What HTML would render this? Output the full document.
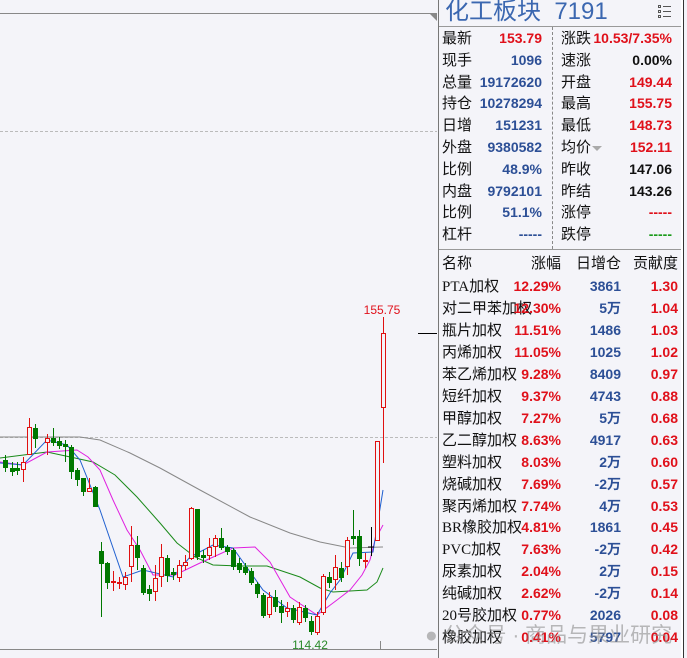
<!DOCTYPE html>
<html><head><meta charset="utf-8"><style>
body{margin:0;width:687px;height:658px;background:#f4f4f9;overflow:hidden;position:relative;font-family:"Liberation Sans","Noto Sans CJK SC",sans-serif}
.p{position:absolute;left:438px;top:0;width:242px;height:658px;border-left:1px solid #777;border-right:1px solid #999;background:#f4f4f9}
.r{position:absolute;font-size:14px;line-height:16px;white-space:nowrap}
.l{color:#111;font-size:15px;margin-top:1px}
.b{color:#2c4f96;font-weight:bold;text-align:right}
.rd{color:#e0101a;font-weight:bold;text-align:right}
.k{color:#111;font-weight:bold;text-align:right}
</style></head><body>
<svg width="438" height="658" style="position:absolute;left:0;top:0">
<line x1="0" y1="13.5" x2="437" y2="13.5" stroke="#888" stroke-width="1"/>
<polygon points="430,14 437,14 437,21" fill="#888"/>
<line x1="0" y1="131.5" x2="437" y2="131.5" stroke="#bbb" stroke-dasharray="3,2"/>
<line x1="0" y1="437.5" x2="437" y2="437.5" stroke="#bbb" stroke-dasharray="3,2"/>
<line x1="0" y1="649.5" x2="437" y2="649.5" stroke="#888"/>
<line x1="380.5" y1="641" x2="380.5" y2="650" stroke="#888"/>
<line x1="418" y1="333.5" x2="437" y2="333.5" stroke="#000"/>
<polyline fill="none" stroke="#888" stroke-width="1" points="0,437 80,437 100,440 130,453 160,468 200,490 250,517 290,533 320,542 350,548 383,547"/>
<polyline fill="none" stroke="#1a8a1a" stroke-width="1" points="0,458 47,452 75,458 93,462 115,475 137,497 160,523 177,543 195,557 213,565 240,566 267,566 300,577 320,588 333,592 367,590 377,582 383,568"/>
<polyline fill="none" stroke="#e020e0" stroke-width="1" points="0,462 23,465 47,452 77,450 88,457 100,470 113,500 127,530 140,550 153,575 175,575 200,563 233,548 255,547 270,562 290,597 317,615 337,600 350,590 362,575 370,560 375,540 383,525"/>
<polyline fill="none" stroke="#2060d0" stroke-width="1" points="0,463 23,465 47,440 67,445 80,460 100,510 123,577 143,570 173,577 190,557 213,545 233,548 263,590 287,608 317,615 330,593 340,580 353,553 373,552 383,490"/>
<g id="c"></g>
<text x="382" y="314" fill="#e0101a" font-size="12" text-anchor="middle" font-family="Liberation Sans">155.75</text>
<text x="310" y="649" fill="#2a8a2a" font-size="12" text-anchor="middle" font-family="Liberation Sans">114.42</text>
</svg>
<div class="p">
<div style="position:absolute;left:0;top:0;width:242px;height:26px;border-bottom:1px solid #999"></div>
<div class="r" style="left:6px;top:-1px;font-size:24px;line-height:26px;color:#3b67b0;letter-spacing:0px">化工板块&nbsp; 7191</div>
<div style="position:absolute;left:219px;top:5px;width:14px;height:12px">
<div style="position:absolute;left:0;top:0;width:3px;height:3px;border:1px solid #555;box-sizing:border-box"></div><div style="position:absolute;left:5px;top:1px;width:8px;height:1px;background:#555"></div>
<div style="position:absolute;left:0;top:5px;width:3px;height:3px;border:1px solid #555;box-sizing:border-box"></div><div style="position:absolute;left:5px;top:6px;width:8px;height:1px;background:#555"></div>
<div style="position:absolute;left:0;top:10px;width:3px;height:3px;border:1px solid #555;box-sizing:border-box"></div><div style="position:absolute;left:5px;top:11px;width:8px;height:1px;background:#555"></div>
</div>
<div style="position:absolute;left:113px;top:27px;height:222px;border-left:1px dashed #888"></div>
<div style="position:absolute;left:0;top:249px;width:242px;border-top:1px solid #999"></div>
<div id="t"></div>
<div style="position:absolute;left:26px;top:146px;width:0;height:0;border-left:5px solid transparent;border-right:5px solid transparent;border-top:5px solid #aaa;margin-left:127px"></div>
</div>
<div style="position:absolute;left:425px;top:619px;font-size:21px;color:rgba(140,140,140,0.6);white-space:nowrap;font-family:'Liberation Sans','Noto Sans CJK SC',sans-serif">●&nbsp;公众号 · 商品与果业研究</div>
<script>
var C=[[5,460,468,455,472,'g'],[12,468,472,462,476,'g'],[17,468,471,462,475,'g'],[23,462,470,457,482,'r'],[29,427,455,418,455,'r'],[35,428,439,424,448,'g'],[47,438,443,434,455,'r'],[53,438,443,428,446,'g'],[59,441,446,437,449,'g'],[65,444,447,440,462,'g'],[71,447,472,445,479,'g'],[77,470,480,468,486,'g'],[83,478,492,478,496,'g'],[89,488,492,478,492,'r'],[95,487,507,486,507,'g'],[101,551,564,542,617,'g'],[107,563,583,562,589,'g'],[113,581,583,571,591,'r'],[119,582,584,577,589,'r'],[125,577,585,572,590,'r'],[131,545,567,526,582,'r'],[137,545,558,536,570,'g'],[143,568,593,565,595,'g'],[149,589,594,585,601,'g'],[155,578,592,565,601,'r'],[161,557,577,544,587,'r'],[167,558,576,555,582,'g'],[173,572,575,568,580,'g'],[179,565,578,560,582,'r'],[185,562,566,555,570,'r'],[191,508,559,507,560,'r'],[197,509,557,509,560,'g'],[203,555,558,550,563,'g'],[209,547,556,538,560,'r'],[215,538,547,535,557,'r'],[221,538,548,528,550,'g'],[227,547,552,545,555,'g'],[233,550,567,548,570,'g'],[239,563,570,558,573,'g'],[245,567,573,563,575,'g'],[251,571,583,568,585,'g'],[257,584,594,582,598,'g'],[263,595,616,593,618,'g'],[269,597,615,592,618,'r'],[275,597,607,590,612,'g'],[281,606,613,600,623,'g'],[287,608,612,602,617,'r'],[293,608,620,605,623,'g'],[299,607,623,602,625,'r'],[305,608,618,605,622,'g'],[311,621,632,616,635,'g'],[317,616,633,612,635,'r'],[323,576,613,574,615,'r'],[329,577,583,572,588,'g'],[335,567,580,555,590,'r'],[341,568,578,562,582,'g'],[347,540,567,537,575,'r'],[353,536,539,510,545,'g'],[359,536,559,530,566,'g'],[365,560,562,553,568,'r'],[371,547,548,527,556,'k'],[377,441,541,441,541,'r'],[383,333,408,317,463,'r']];
var s='';C.forEach(function(c){var col=c[5]=='g'?'#007800':c[5]=='r'?'#e01010':'#000';
s+='<line x1="'+(c[0]+.5)+'" y1="'+c[3]+'" x2="'+(c[0]+.5)+'" y2="'+c[4]+'" stroke="'+col+'"/>';
var h=Math.max(c[2]-c[1],1);
if(c[5]=='g')s+='<rect x="'+(c[0]-2)+'" y="'+c[1]+'" width="5" height="'+h+'" fill="#007800"/>';
else if(c[5]=='r')s+='<rect x="'+(c[0]-2)+'.5" y="'+c[1]+'.5" width="4" height="'+Math.max(h-1,1)+'" fill="#f4f4f9" stroke="#e01010"/>';
else s+='<line x1="'+(c[0]-3)+'" y1="'+c[1]+'" x2="'+(c[0]+3)+'" y2="'+c[1]+'" stroke="#000"/>';});
document.getElementById('c').innerHTML=s;
var t='';
var A=[['最新','153.79','rd','涨跌','10.53/7.35%','rd'],['现手','1096','b','速涨','0.00%','k'],['总量','19172620','b','开盘','149.44','rd'],['持仓','10278294','b','最高','155.75','rd'],['日增','151231','b','最低','148.73','rd'],['外盘','9380582','b','均价','152.11','rd'],['比例','48.9%','b','昨收','147.06','k'],['内盘','9792101','b','昨结','143.26','k'],['比例','51.1%','b','涨停','-----','rd'],['杠杆','-----','b','跌停','-----','gr']];
A.forEach(function(a,i){var y=30+i*21.8;
t+='<div class="r l" style="left:3px;top:'+y+'px">'+a[0]+'</div><div class="r '+a[2]+'" style="right:139px;top:'+y+'px">'+a[1]+'</div>';
t+='<div class="r l" style="left:122px;top:'+y+'px">'+a[3]+'</div><div class="r '+(a[5]=='gr'?'rd':a[5])+'" style="right:9px;top:'+y+'px;'+(a[5]=='gr'?'color:#1a9a1a':'')+'">'+a[4]+'</div>';});
t+='<div class="r l" style="left:3px;top:255px">名称</div><div class="r l" style="right:120px;top:255px">涨幅</div><div class="r l" style="right:60px;top:255px">日增仓</div><div class="r l" style="right:3px;top:255px">贡献度</div>';
var B=[['PTA加权','12.29%','3861','1.30'],['对二甲苯加权','12.30%','5万','1.04'],['瓶片加权','11.51%','1486','1.03'],['丙烯加权','11.05%','1025','1.02'],['苯乙烯加权','9.28%','8409','0.97'],['短纤加权','9.37%','4743','0.88'],['甲醇加权','7.27%','5万','0.68'],['乙二醇加权','8.63%','4917','0.63'],['塑料加权','8.03%','2万','0.60'],['烧碱加权','7.69%','-2万','0.57'],['聚丙烯加权','7.74%','4万','0.53'],['BR橡胶加权','4.81%','1861','0.45'],['PVC加权','7.63%','-2万','0.42'],['尿素加权','2.04%','2万','0.15'],['纯碱加权','2.62%','-2万','0.14'],['20号胶加权','0.77%','2026','0.08'],['橡胶加权','0.41%','5797','0.04']];
B.forEach(function(b,i){var y=278+i*21.95;
t+='<div class="r l" style="left:3px;top:'+y+'px;font-family:\'Liberation Serif\',\'Noto Sans CJK SC\',sans-serif">'+b[0]+'</div><div class="r rd" style="right:120px;top:'+y+'px">'+b[1]+'</div><div class="r b" style="right:60px;top:'+y+'px">'+b[2]+'</div><div class="r rd" style="right:3px;top:'+y+'px">'+b[3]+'</div>';});
document.getElementById('t').innerHTML=t;
</script>
<div style="position:absolute;left:683px;top:0;width:1px;height:658px;background:#333"></div>
<div style="position:absolute;left:681px;top:0;width:2px;height:658px;background:#fff"></div>
</body></html>
